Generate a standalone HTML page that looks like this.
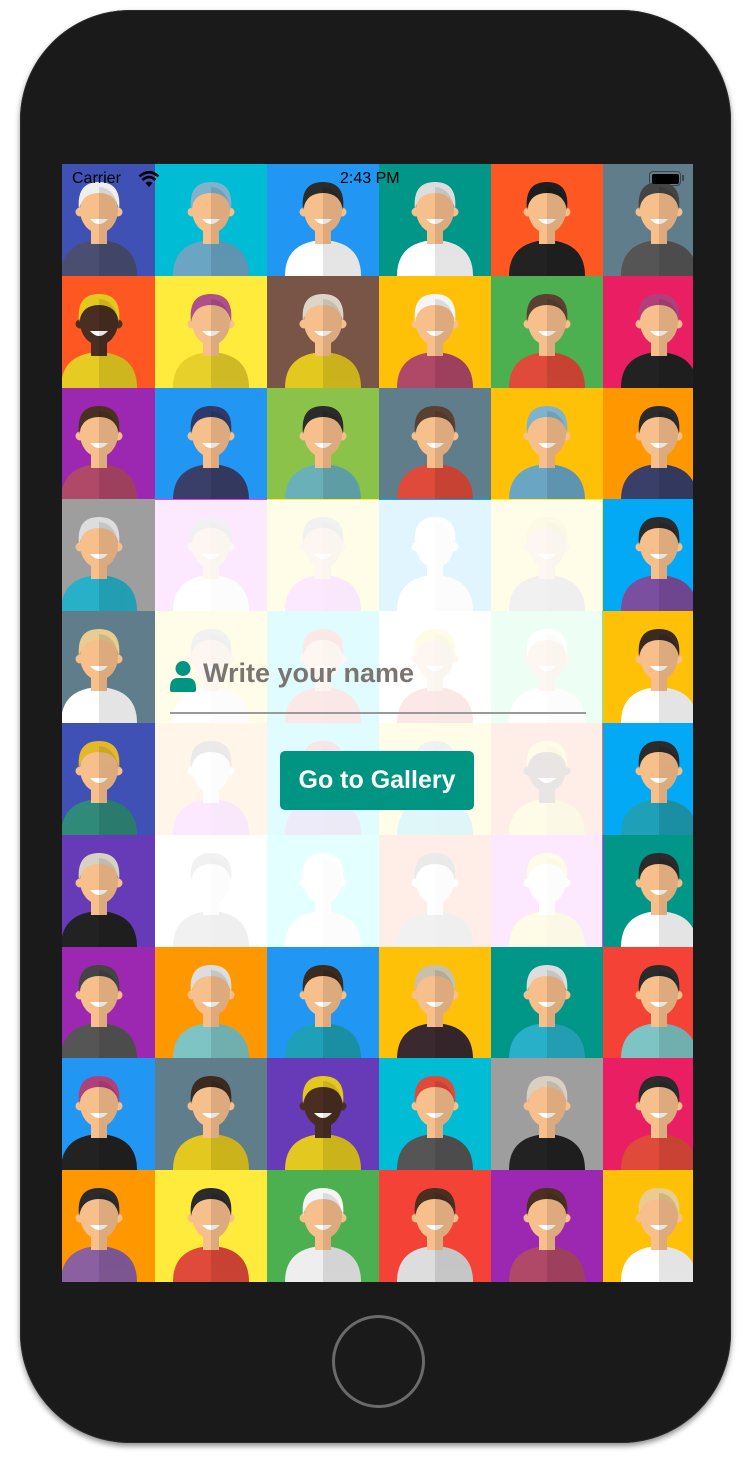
<!DOCTYPE html>
<html><head><meta charset="utf-8">
<style>
html,body{margin:0;padding:0;background:#fff;width:743px;height:1464px;overflow:hidden;font-family:"Liberation Sans",Arial,sans-serif}
.phone{position:absolute;left:20px;top:10px;width:711px;height:1433px;background:#1a1a1a;border-radius:110px;box-shadow:0 3px 6px rgba(0,0,0,.45),inset 0 0 0 1px #2a2a2a}
.screen{position:absolute;left:62px;top:164px;width:631px;height:1118px;overflow:hidden;background:#fff}
.grid{position:absolute;left:-19px;top:0;width:672px;display:grid;grid-template-columns:repeat(6,112px);grid-auto-rows:111.8px}
.c{position:relative;overflow:hidden}
.c svg{display:block;width:112px;height:112px}
.ov{position:absolute;left:93px;top:336px;width:447px;height:447px;background:rgba(255,255,255,.88)}
.home{position:absolute;left:332px;top:1315px;width:87px;height:87px;border:3px solid #6a6a6a;border-radius:50%}
.sb{position:absolute;top:170px;font-size:16px;color:#000}
.field{position:absolute;left:170px;top:656px;width:416px;height:56px;border-bottom:2px solid #9a9a9a}
.ph{position:absolute;left:33px;top:2px;font-size:27px;font-weight:bold;color:#7b7571}
.btn{position:absolute;left:280px;top:751px;width:194px;height:59px;background:#009483;border-radius:5px;color:#fff;font-weight:bold;font-size:25px;line-height:59px;text-align:center}
</style></head><body>
<svg width="0" height="0" style="position:absolute">
<defs>
<clipPath id="r"><rect x="56" y="0" width="56" height="112"/></clipPath>
<symbol id="a" viewBox="0 0 112 112">
<path d="M18 112 Q18 78 56 76 Q94 78 94 112 Z" style="fill:var(--b)"/>
<rect x="48" y="58" width="16" height="22" style="fill:var(--s)"/>
<circle cx="37" cy="48" r="4.5" style="fill:var(--s)"/>
<circle cx="75" cy="48" r="4.5" style="fill:var(--s)"/>
<ellipse cx="56" cy="46" rx="19" ry="23" style="fill:var(--s)"/>
<path d="M36 46 Q33 18 56 18 Q79 18 76 46 Q73 29 56 29 Q39 29 36 46 Z" style="fill:var(--h)"/>
<path d="M47 55 Q56 65 65 55 Z" fill="#fff"/>
<g clip-path="url(#r)" opacity=".1"><path d="M18 112 Q18 78 56 76 Q94 78 94 112 Z"/><ellipse cx="56" cy="46" rx="19" ry="23"/><rect x="48" y="58" width="16" height="22"/></g>
</symbol>
</defs></svg>
<div class="phone"></div>
<div class="screen">
<div class="grid">
<div class="c" style="background:#3F51B5;--b:#4a4f72;--h:#eee;--s:#f7bf8c"><svg><use href="#a"/></svg></div>
<div class="c" style="background:#00BCD4;--b:#6aa6c4;--h:#7fb3cc;--s:#f7bf8c"><svg><use href="#a"/></svg></div>
<div class="c" style="background:#2196F3;--b:#fff;--h:#2b2b2b;--s:#f7bf8c"><svg><use href="#a"/></svg></div>
<div class="c" style="background:#009688;--b:#fff;--h:#ddd;--s:#f7bf8c"><svg><use href="#a"/></svg></div>
<div class="c" style="background:#FF5722;--b:#222;--h:#1e1e1e;--s:#f7bf8c"><svg><use href="#a"/></svg></div>
<div class="c" style="background:#607D8B;--b:#555;--h:#444;--s:#f7bf8c"><svg><use href="#a"/></svg></div>

<div class="c" style="background:#FF5722;--b:#e6cc22;--h:#e3c820;--s:#4a2e22"><svg><use href="#a"/></svg></div>
<div class="c" style="background:#FFEB3B;--b:#e8d02a;--h:#b04f8a;--s:#f7bf8c"><svg><use href="#a"/></svg></div>
<div class="c" style="background:#795548;--b:#e3c820;--h:#ddd6c8;--s:#f7bf8c"><svg><use href="#a"/></svg></div>
<div class="c" style="background:#FFC107;--b:#b04868;--h:#f5f5f5;--s:#f7bf8c"><svg><use href="#a"/></svg></div>
<div class="c" style="background:#4CAF50;--b:#e04a3a;--h:#5a4030;--s:#f7bf8c"><svg><use href="#a"/></svg></div>
<div class="c" style="background:#E91E63;--b:#222;--h:#b0407a;--s:#f7bf8c"><svg><use href="#a"/></svg></div>

<div class="c" style="background:#9C27B0;--b:#b04868;--h:#4a3020;--s:#f7bf8c"><svg><use href="#a"/></svg></div>
<div class="c" style="background:#2196F3;--b:#3a3f6a;--h:#2e3a6a;--s:#f7bf8c"><svg><use href="#a"/></svg></div>
<div class="c" style="background:#8BC34A;--b:#6ab0b8;--h:#2b2b2b;--s:#f7bf8c"><svg><use href="#a"/></svg></div>
<div class="c" style="background:#607D8B;--b:#e04a3a;--h:#5a4030;--s:#f7bf8c"><svg><use href="#a"/></svg></div>
<div class="c" style="background:#FFC107;--b:#6aa6c4;--h:#7fb3cc;--s:#f7bf8c"><svg><use href="#a"/></svg></div>
<div class="c" style="background:#FF9800;--b:#3a3f6a;--h:#2b2b2b;--s:#f7bf8c"><svg><use href="#a"/></svg></div>

<div class="c" style="background:#9E9E9E;--b:#28b0c8;--h:#ddd;--s:#f7bf8c"><svg><use href="#a"/></svg></div>
<div class="c" style="background:#E040FB;--b:#fff;--h:#888;--s:#f7bf8c"><svg><use href="#a"/></svg></div>
<div class="c" style="background:#FFEB3B;--b:#e040fb;--h:#888;--s:#f7bf8c"><svg><use href="#a"/></svg></div>
<div class="c" style="background:#03A9F4;--b:#fff;--h:#fff;--s:#fff"><svg><use href="#a"/></svg></div>
<div class="c" style="background:#FFEB3B;--b:#888;--h:#e3c820;--s:#f7bf8c"><svg><use href="#a"/></svg></div>
<div class="c" style="background:#03A9F4;--b:#7b4fa0;--h:#2b2b2b;--s:#f7bf8c"><svg><use href="#a"/></svg></div>

<div class="c" style="background:#607D8B;--b:#fff;--h:#e8cc90;--s:#f7bf8c"><svg><use href="#a"/></svg></div>
<div class="c" style="background:#FFEB3B;--b:#fff;--h:#888;--s:#f7bf8c"><svg><use href="#a"/></svg></div>
<div class="c" style="background:#00E5FF;--b:#e04a3a;--h:#e04a3a;--s:#f7bf8c"><svg><use href="#a"/></svg></div>
<div class="c" style="background:#FFFFFF;--b:#e04a3a;--h:#f7d830;--s:#f7bf8c"><svg><use href="#a"/></svg></div>
<div class="c" style="background:#69F0AE;--b:#fff;--h:#fff;--s:#f7bf8c"><svg><use href="#a"/></svg></div>
<div class="c" style="background:#FFC107;--b:#fff;--h:#3a2a20;--s:#f7bf8c"><svg><use href="#a"/></svg></div>

<div class="c" style="background:#3F51B5;--b:#2f8a7a;--h:#e3b82a;--s:#f7bf8c"><svg><use href="#a"/></svg></div>
<div class="c" style="background:#FFAB40;--b:#e040fb;--h:#555;--s:#fff"><svg><use href="#a"/></svg></div>
<div class="c" style="background:#00E5FF;--b:#6a5acd;--h:#b03040;--s:#f7bf8c"><svg><use href="#a"/></svg></div>
<div class="c" style="background:#FFEB3B;--b:#00bcd4;--h:#888;--s:#f7bf8c"><svg><use href="#a"/></svg></div>
<div class="c" style="background:#FF7043;--b:#f7d830;--h:#f7d830;--s:#4a2e22"><svg><use href="#a"/></svg></div>
<div class="c" style="background:#03A9F4;--b:#1ea0b8;--h:#2b2b2b;--s:#f7bf8c"><svg><use href="#a"/></svg></div>

<div class="c" style="background:#673AB7;--b:#222;--h:#d8d0c0;--s:#f7bf8c"><svg><use href="#a"/></svg></div>
<div class="c" style="background:#FFFFFF;--b:#888;--h:#888;--s:#fff"><svg><use href="#a"/></svg></div>
<div class="c" style="background:#18FFFF;--b:#fff;--h:#fff;--s:#fff"><svg><use href="#a"/></svg></div>
<div class="c" style="background:#FF7043;--b:#888;--h:#555;--s:#fff"><svg><use href="#a"/></svg></div>
<div class="c" style="background:#E040FB;--b:#f7d830;--h:#f7d830;--s:#fff"><svg><use href="#a"/></svg></div>
<div class="c" style="background:#009688;--b:#fff;--h:#2b2b2b;--s:#f7bf8c"><svg><use href="#a"/></svg></div>

<div class="c" style="background:#9C27B0;--b:#555;--h:#444;--s:#f7bf8c"><svg><use href="#a"/></svg></div>
<div class="c" style="background:#FF9800;--b:#7fc4c4;--h:#ddd;--s:#f7bf8c"><svg><use href="#a"/></svg></div>
<div class="c" style="background:#2196F3;--b:#1ea0b8;--h:#3a2a20;--s:#f7bf8c"><svg><use href="#a"/></svg></div>
<div class="c" style="background:#FFC107;--b:#3a2a30;--h:#c8c0a8;--s:#f7bf8c"><svg><use href="#a"/></svg></div>
<div class="c" style="background:#009688;--b:#28b0c8;--h:#ddd;--s:#f7bf8c"><svg><use href="#a"/></svg></div>
<div class="c" style="background:#F44336;--b:#7fc4c4;--h:#2b2b2b;--s:#f7bf8c"><svg><use href="#a"/></svg></div>

<div class="c" style="background:#2196F3;--b:#222;--h:#b0407a;--s:#f7bf8c"><svg><use href="#a"/></svg></div>
<div class="c" style="background:#607D8B;--b:#e3c820;--h:#3a2a20;--s:#f7bf8c"><svg><use href="#a"/></svg></div>
<div class="c" style="background:#673AB7;--b:#e3c820;--h:#e3c820;--s:#4a2e22"><svg><use href="#a"/></svg></div>
<div class="c" style="background:#00BCD4;--b:#555;--h:#e04a3a;--s:#f7bf8c"><svg><use href="#a"/></svg></div>
<div class="c" style="background:#9E9E9E;--b:#222;--h:#d8d0c0;--s:#f7bf8c"><svg><use href="#a"/></svg></div>
<div class="c" style="background:#E91E63;--b:#e04a3a;--h:#2b2b2b;--s:#f7bf8c"><svg><use href="#a"/></svg></div>

<div class="c" style="background:#FF9800;--b:#8a60a0;--h:#2b2b2b;--s:#f7bf8c"><svg><use href="#a"/></svg></div>
<div class="c" style="background:#FFEB3B;--b:#e04a3a;--h:#2b2b2b;--s:#f7bf8c"><svg><use href="#a"/></svg></div>
<div class="c" style="background:#4CAF50;--b:#eee;--h:#f5f5f5;--s:#f7bf8c"><svg><use href="#a"/></svg></div>
<div class="c" style="background:#F44336;--b:#ddd;--h:#4a2e22;--s:#f7bf8c"><svg><use href="#a"/></svg></div>
<div class="c" style="background:#9C27B0;--b:#b04868;--h:#4a3020;--s:#f7bf8c"><svg><use href="#a"/></svg></div>
<div class="c" style="background:#FFC107;--b:#fff;--h:#e8cc90;--s:#f7bf8c"><svg><use href="#a"/></svg></div>
</div>
<div class="ov"></div>
</div>
<div class="sb" style="left:72px">Carrier</div>
<svg style="position:absolute;left:138px;top:170px" width="22" height="18" viewBox="0 0 22 18"><path d="M11 17 L7.5 13 Q11 10 14.5 13 Z" fill="#000"/><path d="M4.5 10 Q11 4 17.5 10" stroke="#000" stroke-width="2.6" fill="none"/><path d="M1.5 6.5 Q11 -2 20.5 6.5" stroke="#000" stroke-width="2.6" fill="none"/></svg>
<div class="sb" style="left:340px">2:43 PM</div>
<div style="position:absolute;left:649px;top:171px;width:30px;height:13px;border:1.5px solid #444;border-radius:4px"><div style="position:absolute;left:1.5px;top:1.5px;width:27px;height:10px;background:#000;border-radius:2px"></div></div>
<div style="position:absolute;left:682px;top:175px;width:2px;height:6px;background:#444"></div>
<div class="field">
<svg style="position:absolute;left:0;top:4px" width="26" height="32" viewBox="0 0 26 32"><circle cx="13" cy="8.5" r="7.5" fill="#009483"/><path d="M0 28 Q0 18 8 18 L18 18 Q26 18 26 28 L26 30 Q26 32 24 32 L2 32 Q0 32 0 30 Z" fill="#009483"/></svg>
<div class="ph">Write your name</div>
</div>
<div class="btn">Go to Gallery</div>
<div class="home"></div>
</body></html>
